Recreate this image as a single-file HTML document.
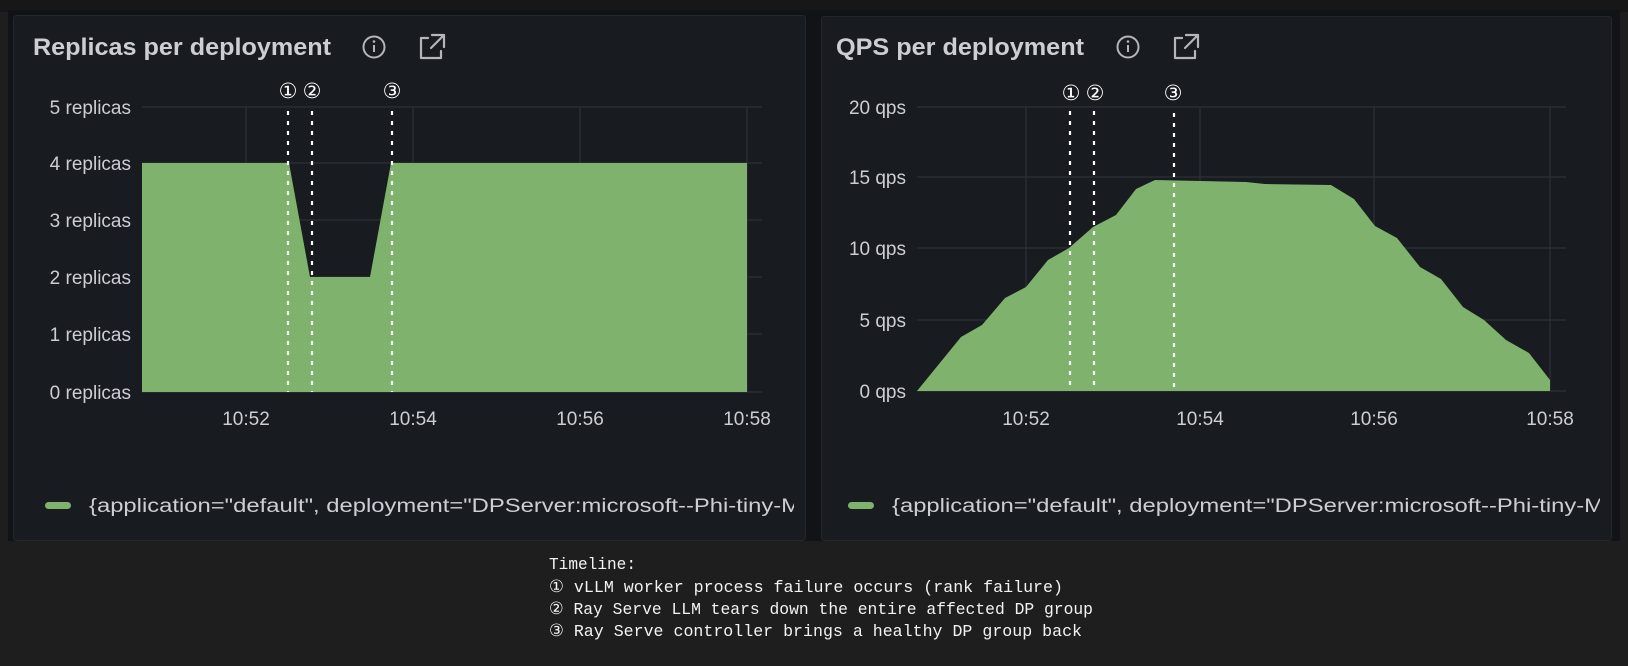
<!DOCTYPE html>
<html><head><meta charset="utf-8"><style>
html,body{margin:0;padding:0;background:#1e1e1e;width:1628px;height:666px;overflow:hidden}
svg{display:block}
.t{font-family:"Liberation Sans",Arial,sans-serif;fill:#cdcdd6}
.m{font-family:"Liberation Mono","DejaVu Sans Mono",monospace;fill:#f2f2f2;font-size:17px}
</style></head><body>
<svg width="1628" height="666" viewBox="0 0 1628 666" xmlns="http://www.w3.org/2000/svg">
<defs>
<clipPath id="c1"><rect x="13" y="0" width="781" height="666"/></clipPath>
<clipPath id="c2"><rect x="821" y="0" width="779" height="666"/></clipPath>
</defs>
<rect x="0" y="0" width="1628" height="12" fill="#171717"/>
<rect x="8" y="10" width="1612" height="531" fill="#121316"/>
<!-- panels -->
<rect x="13.5" y="15.5" width="792" height="525" rx="3" fill="#181b1f" stroke="#24272d"/>
<rect x="821.5" y="16.5" width="790" height="524" rx="3" fill="#181b1f" stroke="#24272d"/>

<!-- LEFT PANEL -->
<text class="t" x="33" y="55" font-size="24" font-weight="bold" fill="#d8d9e0" textLength="298" lengthAdjust="spacingAndGlyphs">Replicas per deployment</text>
<circle cx="374" cy="47" r="10.5" fill="none" stroke="#b5b5bd" stroke-width="2"/>
<rect x="373" y="45" width="2" height="7" fill="#b5b5bd"/><circle cx="374" cy="41.5" r="1.3" fill="#b5b5bd"/>
<path d="M428 38 H421 V58 H441 V51 M432 35 H444 V47 M444 35 L431 48" fill="none" stroke="#b5b5bd" stroke-width="2.2" stroke-linecap="round" stroke-linejoin="round"/>

<g stroke="#2d3036" stroke-width="1.3">
<line x1="142" y1="107" x2="762" y2="107"/><line x1="142" y1="163" x2="762" y2="163"/>
<line x1="142" y1="220" x2="762" y2="220"/><line x1="142" y1="277" x2="762" y2="277"/>
<line x1="142" y1="334" x2="762" y2="334"/><line x1="142" y1="392" x2="762" y2="392"/>
<line x1="246" y1="107" x2="246" y2="392"/><line x1="413" y1="107" x2="413" y2="392"/>
<line x1="580" y1="107" x2="580" y2="392"/><line x1="747" y1="107" x2="747" y2="392"/>
</g>
<path d="M142 163 L289 163 L310 277 L370 277 L391 163 L747 163 L747 392 L142 392 Z" fill="#7eb26d"/>
<g class="t" font-size="19" text-anchor="end">
<text x="131" y="114">5 replicas</text><text x="131" y="170">4 replicas</text>
<text x="131" y="227">3 replicas</text><text x="131" y="284">2 replicas</text>
<text x="131" y="341">1 replicas</text><text x="131" y="399">0 replicas</text>
</g>
<g class="t" font-size="19" text-anchor="middle">
<text x="246" y="425">10:52</text><text x="413" y="425">10:54</text>
<text x="580" y="425">10:56</text><text x="747" y="425">10:58</text>
</g>
<g stroke="#fff" stroke-width="2.2" stroke-dasharray="4 6">
<line x1="288" y1="111" x2="288" y2="392"/><line x1="312" y1="111" x2="312" y2="392"/><line x1="392" y1="111" x2="392" y2="392"/>
</g>
<g font-family="'DejaVu Sans',sans-serif" font-size="21" fill="#fff" text-anchor="middle">
<text x="288" y="98">①</text><text x="312" y="98">②</text><text x="392" y="98">③</text>
</g>
<rect x="45" y="502" width="26" height="7" rx="3.5" fill="#7eb26d"/>
<g clip-path="url(#c1)"><text class="t" x="89" y="512" font-size="19" textLength="712" lengthAdjust="spacingAndGlyphs">{application="default", deployment="DPServer:microsoft--Phi-tiny-M</text></g>

<!-- RIGHT PANEL -->
<text class="t" x="836" y="55" font-size="24" font-weight="bold" fill="#d8d9e0" textLength="248" lengthAdjust="spacingAndGlyphs">QPS per deployment</text>
<circle cx="1128" cy="47" r="10.5" fill="none" stroke="#b5b5bd" stroke-width="2"/>
<rect x="1127" y="45" width="2" height="7" fill="#b5b5bd"/><circle cx="1128" cy="41.5" r="1.3" fill="#b5b5bd"/>
<path d="M1182 38 H1175 V58 H1195 V51 M1186 35 H1198 V47 M1198 35 L1185 48" fill="none" stroke="#b5b5bd" stroke-width="2.2" stroke-linecap="round" stroke-linejoin="round"/>

<g stroke="#2d3036" stroke-width="1.3">
<line x1="917" y1="107" x2="1566" y2="107"/><line x1="917" y1="177" x2="1566" y2="177"/>
<line x1="917" y1="248" x2="1566" y2="248"/><line x1="917" y1="320" x2="1566" y2="320"/>
<line x1="917" y1="391" x2="1566" y2="391"/>
<line x1="1026" y1="107" x2="1026" y2="391"/><line x1="1200" y1="107" x2="1200" y2="391"/>
<line x1="1374" y1="107" x2="1374" y2="391"/><line x1="1550" y1="107" x2="1550" y2="391"/>
</g>
<path d="M917 391 L961 337 L982 325 L1005 298 L1026 287 L1048 260 L1069 248 L1093 227 L1116 215 L1136 189 L1155 180 L1246 182 L1265 184 L1331 185 L1354 199 L1375 226 L1397 238 L1420 267 L1441 279 L1463 307 L1484 320 L1506 340 L1529 353 L1550 380 L1550 391 Z" fill="#7eb26d"/>
<g class="t" font-size="19" text-anchor="end">
<text x="906" y="114">20 qps</text><text x="906" y="184">15 qps</text>
<text x="906" y="255">10 qps</text><text x="906" y="327">5 qps</text>
<text x="906" y="398">0 qps</text>
</g>
<g class="t" font-size="19" text-anchor="middle">
<text x="1026" y="425">10:52</text><text x="1200" y="425">10:54</text>
<text x="1374" y="425">10:56</text><text x="1550" y="425">10:58</text>
</g>
<g stroke="#fff" stroke-width="2.2" stroke-dasharray="4 6">
<line x1="1070" y1="111" x2="1070" y2="391"/><line x1="1094" y1="111" x2="1094" y2="391"/><line x1="1174" y1="113" x2="1174" y2="391"/>
</g>
<g font-family="'DejaVu Sans',sans-serif" font-size="21" fill="#fff" text-anchor="middle">
<text x="1071" y="100">①</text><text x="1095" y="100">②</text><text x="1173" y="100">③</text>
</g>
<rect x="848" y="502" width="26" height="7" rx="3.5" fill="#7eb26d"/>
<g clip-path="url(#c2)"><text class="t" x="892" y="512" font-size="19" textLength="712" lengthAdjust="spacingAndGlyphs">{application="default", deployment="DPServer:microsoft--Phi-tiny-M</text></g>

<!-- timeline -->
<text class="m" x="549" y="569" textLength="87" lengthAdjust="spacingAndGlyphs">Timeline:</text>
<text class="m" x="549" y="592" textLength="514" lengthAdjust="spacingAndGlyphs">① vLLM worker process failure occurs (rank failure)</text>
<text class="m" x="549" y="614" textLength="544" lengthAdjust="spacingAndGlyphs">② Ray Serve LLM tears down the entire affected DP group</text>
<text class="m" x="549" y="636" textLength="533" lengthAdjust="spacingAndGlyphs">③ Ray Serve controller brings a healthy DP group back</text>
</svg>
</body></html>
